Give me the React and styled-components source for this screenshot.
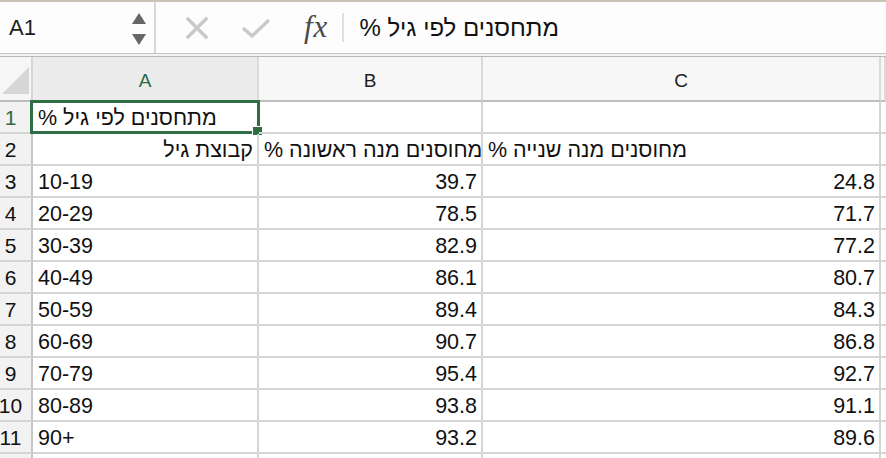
import React from 'react';
import styled, { createGlobalStyle } from 'styled-components';

const GlobalStyle = createGlobalStyle`
  html, body {
    margin: 0;
    padding: 0;
    background: #fff;
    overflow: hidden;
  }
  body {
    font-family: "Liberation Sans", Arial, sans-serif;
  }
`;

const Window = styled.div`
  width: 886px;
  height: 458px;
  overflow: hidden;
  background: #fff;
  border-top: 2px solid #cbc4b6;
  box-sizing: border-box;
`;

const FormulaBar = styled.div`
  display: flex;
  align-items: center;
  height: 51px;
  background: #fdfdfd;
  border-bottom: 1px solid #c4c4c4;
`;

const BarDivider = styled.div`
  height: 2px;
  background: #f3f3f3;
  border-bottom: 1px solid #b8b8b8;
`;

const NameBox = styled.div`
  width: 156px;
  height: 100%;
  display: flex;
  align-items: center;
  justify-content: space-between;
  padding: 0 8px 0 9px;
  box-sizing: border-box;
  font-size: 22px;
  color: #1e1e1e;
  border-right: 2px solid #d8d8d8;
`;

const Spinner = styled.div`
  display: flex;
  flex-direction: column;
  gap: 10px;
  margin-top: 2px;
`;

const Arrow = styled.div`
  width: 0;
  height: 0;
  border-left: 7px solid transparent;
  border-right: 7px solid transparent;
  ${p => p.$down
    ? 'border-top: 11px solid #666;'
    : 'border-bottom: 11px solid #666;'}
`;

const IconButton = styled.div`
  display: flex;
  align-items: center;
  justify-content: center;
  margin-left: ${p => p.$gap}px;
`;

const Fx = styled.div`
  margin-left: 33px;
  font-family: "Liberation Serif", "DejaVu Serif", serif;
  font-style: italic;
  font-size: 31px;
  color: #4a4a4a;
  letter-spacing: 1px;
  line-height: 1;
  margin-top: -3px;
`;

const ShortSep = styled.div`
  width: 2px;
  height: 29px;
  background: #e0e0e0;
  margin-left: 14px;
`;

const FormulaText = styled.div`
  margin-left: 15px;
  font-size: 24px;
  color: #111;
  direction: rtl;
`;

const Row = styled.div`
  display: grid;
  grid-template-columns: 33px 226px 224px 398px 5px;
  height: ${p => p.$h || 32}px;
`;

const Corner = styled.div`
  background: #f6f6f6;
  border-right: 2px solid #d6d6d6;
  border-bottom: 2px solid #bdbdbd;
  box-sizing: border-box;
  overflow: hidden;
`;

const CornerTriangle = styled.svg`
  display: block;
  margin: 10px 0 0 2px;
`;

const ColHead = styled.div`
  display: flex;
  align-items: center;
  justify-content: center;
  font-size: 19px;
  color: ${p => (p.$active ? '#2c6b43' : '#1e1e1e')};
  background: ${p => (p.$active ? '#ececec' : '#f7f7f7')};
  border-right: 2px solid #dadada;
  border-bottom: 2px solid #bdbdbd;
  box-sizing: border-box;
  padding-top: 4px;
`;

const RowHead = styled.div`
  display: flex;
  align-items: center;
  justify-content: center;
  padding-right: 10px;
  font-size: 21px;
  color: ${p => (p.$active ? '#2c6b43' : '#111')};
  background: #f2f2f2;
  border-right: 2px solid #c6c6c6;
  border-bottom: 2px solid #d6d6d6;
  box-sizing: border-box;
  padding-top: 2px;
`;

const Cell = styled.div`
  position: relative;
  display: flex;
  align-items: center;
  justify-content: ${p => (p.$right ? 'flex-end' : 'flex-start')};
  padding: 3px ${p => (p.$right ? 4 : 5)}px 0 ${p => (p.$right ? 4 : 5)}px;
  font-size: 21.5px;
  color: #111;
  white-space: nowrap;
  border-right: 2px solid #d6d6d6;
  border-bottom: 2px solid #d6d6d6;
  box-sizing: border-box;
`;

const Rtl = styled.span`
  direction: rtl;
  unicode-bidi: isolate;
`;

const Selection = styled.div`
  position: absolute;
  left: -3px;
  right: -3px;
  top: -2px;
  bottom: -2px;
  border: 3px solid #2f6d45;
  pointer-events: none;
`;

const FillHandle = styled.div`
  position: absolute;
  right: -6px;
  bottom: -5px;
  width: 9px;
  height: 8px;
  background: #2f6d45;
  border: 1px solid #fff;
`;

const ages = [
  ['10-19', '39.7', '24.8'],
  ['20-29', '78.5', '71.7'],
  ['30-39', '82.9', '77.2'],
  ['40-49', '86.1', '80.7'],
  ['50-59', '89.4', '84.3'],
  ['60-69', '90.7', '86.8'],
  ['70-79', '95.4', '92.7'],
  ['80-89', '93.8', '91.1'],
  ['90+', '93.2', '89.6'],
];

export default function App() {
  return (
    <Window>
      <GlobalStyle />
      <FormulaBar>
        <NameBox>
          A1
          <Spinner>
            <Arrow />
            <Arrow $down />
          </Spinner>
        </NameBox>
        <IconButton $gap={30}>
          <svg width="22" height="22" viewBox="0 0 22 22">
            <path d="M2 2 L20 20 M20 2 L2 20" stroke="#c9c9c9" strokeWidth="3.4" strokeLinecap="square" />
          </svg>
        </IconButton>
        <IconButton $gap={33}>
          <svg width="30" height="22" viewBox="0 0 30 22">
            <path d="M2 11 L11 19 L28 3" stroke="#c9c9c9" strokeWidth="3.4" fill="none" />
          </svg>
        </IconButton>
        <Fx>fx</Fx>
        <ShortSep />
        <FormulaText>מתחסנים לפי גיל %</FormulaText>
      </FormulaBar>
      <BarDivider />

      <Row $h={45}>
        <Corner>
          <CornerTriangle width="28" height="28" viewBox="0 0 28 28">
            <polygon points="27,0 27,27 0,27" fill="#d6d6d6" />
          </CornerTriangle>
        </Corner>
        <ColHead $active>A</ColHead>
        <ColHead>B</ColHead>
        <ColHead>C</ColHead>
        <ColHead />
      </Row>

      <Row>
        <RowHead $active>1</RowHead>
        <Cell>
          <Rtl>מתחסנים לפי גיל %</Rtl>
          <Selection>
            <FillHandle />
          </Selection>
        </Cell>
        <Cell />
        <Cell />
        <Cell />
      </Row>

      <Row>
        <RowHead>2</RowHead>
        <Cell $right>
          <Rtl>קבוצת גיל</Rtl>
        </Cell>
        <Cell>
          <Rtl>מחוסנים מנה ראשונה %</Rtl>
        </Cell>
        <Cell>
          <Rtl>מחוסנים מנה שנייה %</Rtl>
        </Cell>
        <Cell />
      </Row>

      {ages.map(([age, first, second], i) => (
        <Row key={age}>
          <RowHead>{i + 3}</RowHead>
          <Cell>{age}</Cell>
          <Cell $right>{first}</Cell>
          <Cell $right>{second}</Cell>
          <Cell />
        </Row>
      ))}

      <Row>
        <RowHead />
        <Cell />
        <Cell />
        <Cell />
        <Cell />
      </Row>
    </Window>
  );
}
